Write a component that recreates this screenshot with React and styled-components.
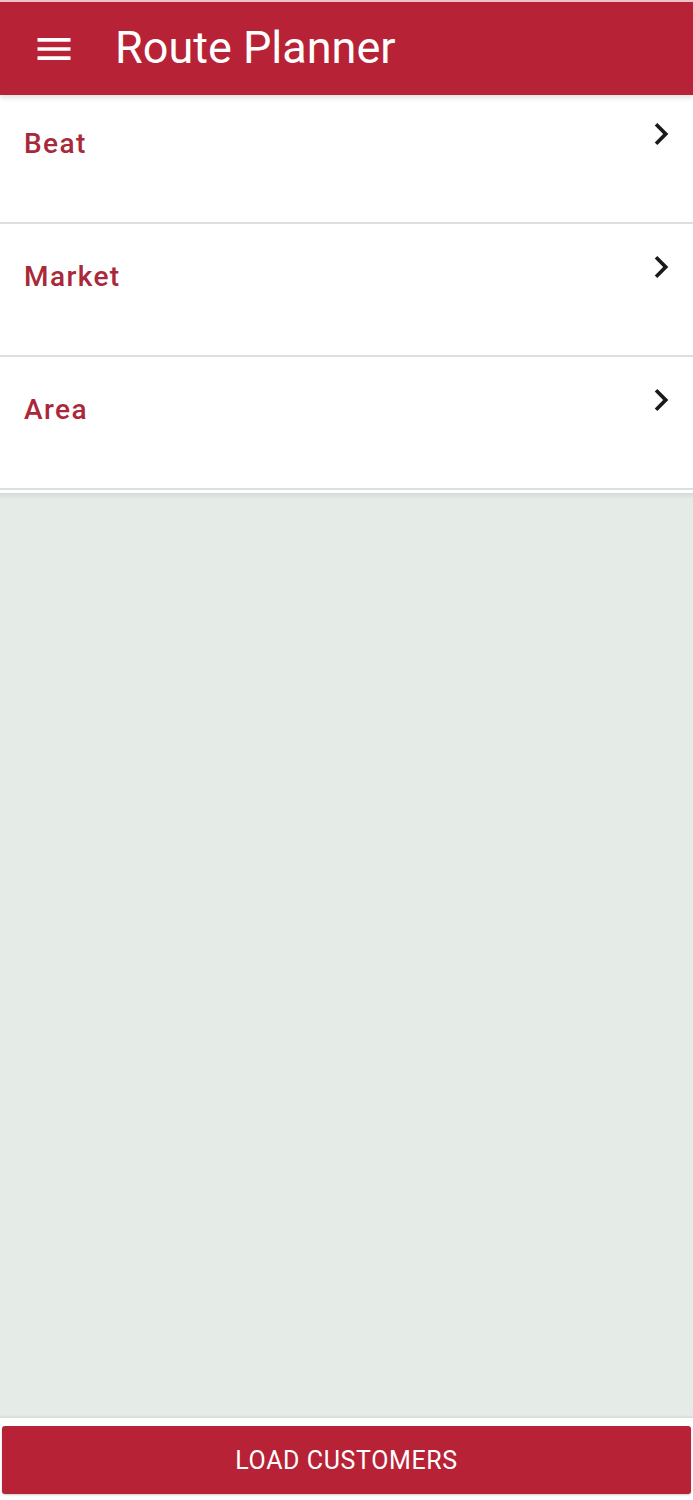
import styled, { createGlobalStyle } from "styled-components";

const GlobalStyle = createGlobalStyle`
  html, body {
    margin: 0;
    padding: 0;
    background: #ffffff;
  }
  body {
    font-family: Roboto, "Liberation Sans", sans-serif;
  }
`;

const Screen = styled.div`
  width: 693px;
  height: 1500px;
  display: flex;
  flex-direction: column;
  background: #ffffff;
  overflow: hidden;
`;

const Toolbar = styled.header`
  position: relative;
  z-index: 2;
  height: 95px;
  flex-shrink: 0;
  display: flex;
  align-items: center;
  padding-left: 32px;
  gap: 39px;
  background: #b82236;
  border-top: 2px solid #e9c3c9;
  box-sizing: border-box;
  box-shadow: 0 3px 5px rgba(0, 0, 0, 0.12);
`;

const MenuButton = styled.button`
  width: 44px;
  height: 44px;
  padding: 0;
  border: none;
  background: transparent;
  display: flex;
  svg {
    width: 44px;
    height: 44px;
    fill: #ffffff;
  }
`;

const Title = styled.h1`
  margin: 0;
  margin-top: -2px;
  font-family: Roboto, "Liberation Sans", sans-serif;
  font-weight: 400;
  font-size: 45px;
  color: #ffffff;
`;

const List = styled.ul`
  list-style: none;
  margin: 0;
  padding: 0;
  background: #ffffff;
  flex-shrink: 0;
  border-bottom: 3px solid #ffffff;
`;

const Row = styled.li`
  height: ${({ $first }) => ($first ? "127px" : "131px")};
  box-sizing: content-box;
  display: flex;
  justify-content: space-between;
  align-items: flex-start;
  padding-left: 24px;
  padding-right: 10px;
  border-bottom: 2px solid #dedede;
`;

const Label = styled.span`
  margin-top: ${({ $first }) => ($first ? "32px" : "36px")};
  font-family: Roboto, "Liberation Sans", sans-serif;
  font-weight: 500;
  font-size: 28px;
  letter-spacing: 1.4px;
  color: #a92839;
`;

const Chevron = styled.svg`
  width: 44px;
  height: 44px;
  margin-top: ${({ $first }) => ($first ? "17px" : "21px")};
  fill: #1a1a1a;
`;

const MapArea = styled.div`
  flex: 1;
  background:
    linear-gradient(to bottom, rgba(0, 0, 0, 0.07), rgba(0, 0, 0, 0) 6px),
    linear-gradient(to top, rgba(0, 0, 0, 0.08), rgba(0, 0, 0, 0) 3px),
    #e5ebe7;
`;

const Footer = styled.footer`
  height: 82px;
  flex-shrink: 0;
  padding: 8px 2px 6px;
  box-sizing: border-box;
  background: #ffffff;
`;

const LoadButton = styled.button`
  width: 100%;
  height: 100%;
  border: none;
  border-radius: 3px;
  background: #b82236;
  color: #ffffff;
  font-family: Roboto, "Liberation Sans", sans-serif;
  font-size: 25px;
  font-weight: 400;
  letter-spacing: 0.6px;
  text-transform: uppercase;
  box-shadow: 0 1px 2px rgba(0, 0, 0, 0.2);
`;

const filters = ["Beat", "Market", "Area"];

const App = () => {
  return (
    <>
      <GlobalStyle />
      <Screen>
        <Toolbar>
          <MenuButton aria-label="menu">
            <svg viewBox="0 0 24 24">
              <path d="M3 18h18v-2H3v2zm0-5h18v-2H3v2zm0-7v2h18V6H3z" />
            </svg>
          </MenuButton>
          <Title>Route Planner</Title>
        </Toolbar>

        <List>
          {filters.map((name, i) => (
            <Row key={name} $first={i === 0}>
              <Label $first={i === 0}>{name}</Label>
              <Chevron $first={i === 0} viewBox="0 0 24 24">
                <path d="M10 6L8.59 7.41 13.17 12l-4.58 4.59L10 18l6-6z" />
              </Chevron>
            </Row>
          ))}
        </List>

        <MapArea />

        <Footer>
          <LoadButton>Load Customers</LoadButton>
        </Footer>
      </Screen>
    </>
  );
};

export default App;
